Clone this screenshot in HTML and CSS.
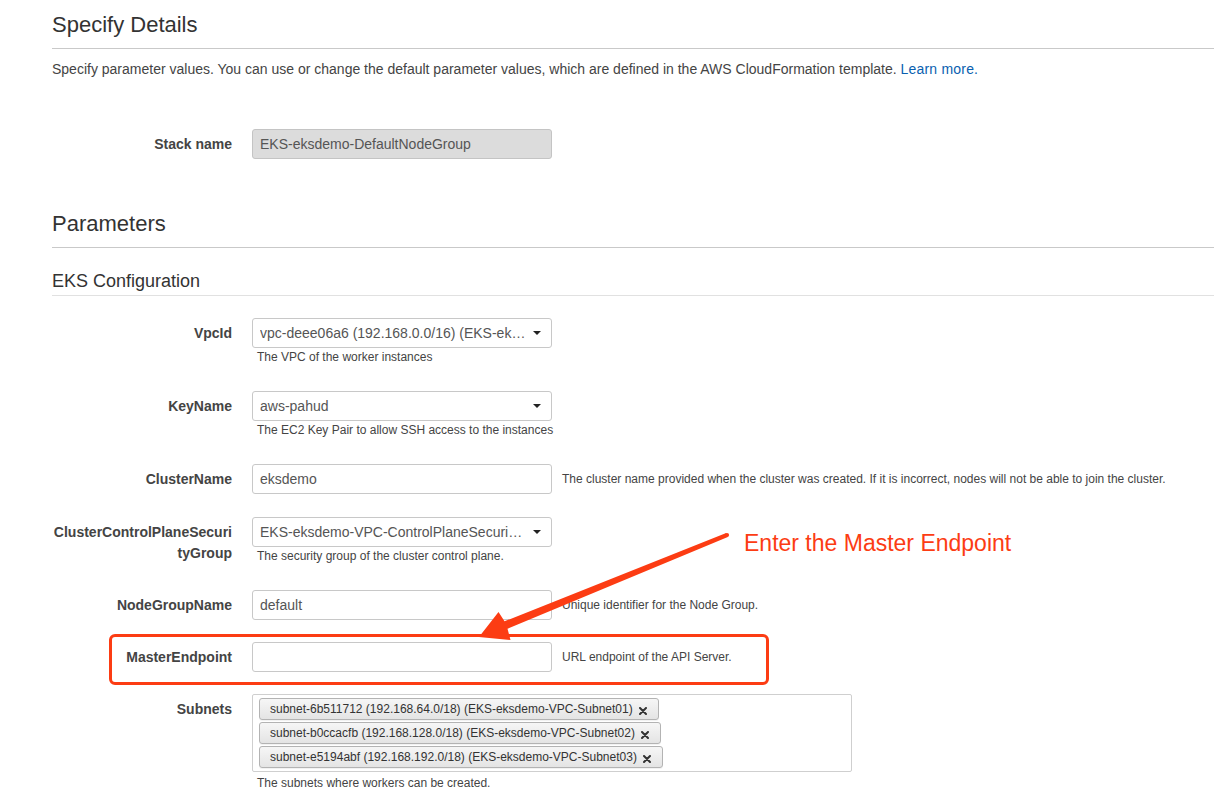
FILE: index.html
```html
<!DOCTYPE html>
<html lang="en">
<head>
<meta charset="utf-8">
<title>Specify Details</title>
<link rel="stylesheet" href="styles.css">
</head>
<body>
<div class="page">
  <h1 class="section-title">Specify Details</h1>
  <p class="intro">Specify parameter values. You can use or change the default parameter values, which are defined in the AWS CloudFormation template. <a class="link" href="#">Learn more.</a></p>

  <div class="row stack-row">
    <div class="label">Stack name</div>
    <div class="control">
      <div class="field-col"><div class="input input-disabled">EKS-eksdemo-DefaultNodeGroup</div></div>
    </div>
  </div>

  <h2 class="section-title params-title">Parameters</h2>
  <h3 class="group-title">EKS Configuration</h3>

  <div class="row first-row">
    <div class="label">VpcId</div>
    <div class="control">
      <div class="field-col">
        <div class="input select"><span class="select-text">vpc-deee06a6 (192.168.0.0/16) (EKS-ek…</span><span class="caret"></span></div>
        <div class="help-below">The VPC of the worker instances</div>
      </div>
    </div>
  </div>

  <div class="row">
    <div class="label">KeyName</div>
    <div class="control">
      <div class="field-col">
        <div class="input select"><span class="select-text">aws-pahud</span><span class="caret"></span></div>
        <div class="help-below">The EC2 Key Pair to allow SSH access to the instances</div>
      </div>
    </div>
  </div>

  <div class="row">
    <div class="label">ClusterName</div>
    <div class="control">
      <div class="field-col"><div class="input">eksdemo</div></div>
      <div class="help-side">The cluster name provided when the cluster was created. If it is incorrect, nodes will not be able to join the cluster.</div>
    </div>
  </div>

  <div class="row row-after-inline">
    <div class="label">ClusterControlPlaneSecurityGroup</div>
    <div class="control">
      <div class="field-col">
        <div class="input select"><span class="select-text">EKS-eksdemo-VPC-ControlPlaneSecuri…</span><span class="caret"></span></div>
        <div class="help-below">The security group of the cluster control plane.</div>
      </div>
    </div>
  </div>

  <div class="row">
    <div class="label">NodeGroupName</div>
    <div class="control">
      <div class="field-col"><div class="input">default</div></div>
      <div class="help-side">Unique identifier for the Node Group.</div>
    </div>
  </div>

  <div class="row highlight-row">
    <div class="highlight-box"></div>
    <div class="label">MasterEndpoint</div>
    <div class="control">
      <div class="field-col"><div class="input"></div></div>
      <div class="help-side">URL endpoint of the API Server.</div>
    </div>
  </div>

  <div class="row">
    <div class="label">Subnets</div>
    <div class="control">
      <div class="multi-col">
        <div class="multi">
          <div class="token"><span>subnet-6b511712 (192.168.64.0/18) (EKS-eksdemo-VPC-Subnet01)</span><svg class="token-x" width="8" height="8" viewBox="0 0 8 8"><path d="M1 1 L7 7 M7 1 L1 7" stroke="#333" stroke-width="2" stroke-linecap="round"/></svg></div>
          <div class="token"><span>subnet-b0ccacfb (192.168.128.0/18) (EKS-eksdemo-VPC-Subnet02)</span><svg class="token-x" width="8" height="8" viewBox="0 0 8 8"><path d="M1 1 L7 7 M7 1 L1 7" stroke="#333" stroke-width="2" stroke-linecap="round"/></svg></div>
          <div class="token"><span>subnet-e5194abf (192.168.192.0/18) (EKS-eksdemo-VPC-Subnet03)</span><svg class="token-x" width="8" height="8" viewBox="0 0 8 8"><path d="M1 1 L7 7 M7 1 L1 7" stroke="#333" stroke-width="2" stroke-linecap="round"/></svg></div>
        </div>
        <div class="help-below multi-help">The subnets where workers can be created.</div>
      </div>
    </div>
  </div>

  <svg class="arrow" width="1214" height="808" viewBox="0 0 1214 808">
    <circle cx="727" cy="535" r="2.1" fill="#fc3c13"/>
    <polygon fill="#fc3c13" points="726.2,533.1 504.5,621.3 498.5,612 479,637 510.5,640 507.5,628.7 727.8,536.9"/>
  </svg>
  <div class="callout">Enter the Master Endpoint</div>
</div>
</body>
</html>
```

FILE: styles.css
```css
html, body {
  margin: 0;
  padding: 0;
  background: #ffffff;
}

.page {
  position: relative;
  padding-left: 52px;
  min-height: 808px;
  box-sizing: border-box;
  font-family: "Liberation Sans", Arial, sans-serif;
  color: #444;
  overflow: hidden;
}

.section-title {
  margin: 0;
  font-size: 22px;
  line-height: 26px;
  font-weight: normal;
  color: #333;
  padding: 12px 0 10px 0;
  border-bottom: 1px solid #c9c9c9;
}

.params-title {
  margin-top: 52px;
  padding-top: 0;
}

.intro {
  margin: 10px 0 0 0;
  font-size: 14px;
  line-height: 20px;
  color: #444;
}

.link {
  color: #0a5fb0;
  text-decoration: none;
  letter-spacing: 0.2px;
}

.group-title {
  margin: 22px 0 0 0;
  font-size: 18px;
  line-height: 22px;
  font-weight: normal;
  color: #333;
  padding-bottom: 3px;
  border-bottom: 1px solid #e1e1e1;
}

.row {
  display: flex;
  align-items: flex-start;
  column-gap: 20px;
  margin-top: 22px;
}

.stack-row {
  margin-top: 50px;
}

.first-row {
  margin-top: 22px;
}

.row-after-inline {
  margin-top: 23px;
}

.label {
  width: 180px;
  flex: none;
  text-align: right;
  font-size: 14px;
  line-height: 21px;
  padding-top: 5px;
  font-weight: bold;
  color: #444;
  word-break: break-all;
}

.control {
  display: flex;
  align-items: flex-start;
  column-gap: 10px;
}

.field-col {
  width: 300px;
  flex: none;
}

.input {
  box-sizing: border-box;
  height: 30px;
  border: 1px solid #c8c8c8;
  border-radius: 3px;
  background: #fff;
  padding: 0 7px 0 7px;
  font-size: 14px;
  line-height: 28px;
  color: #555;
  white-space: nowrap;
  overflow: hidden;
}

.input-disabled {
  background: #dcdcdc;
  border-color: #c4c4c4;
}

.select {
  display: flex;
  align-items: center;
  justify-content: space-between;
  padding-right: 10px;
}

.select-text {
  overflow: hidden;
  white-space: nowrap;
}

.caret {
  flex: none;
  width: 0;
  height: 0;
  border-left: 4px solid transparent;
  border-right: 4px solid transparent;
  border-top: 4px solid #222;
  margin-left: 8px;
}

.help-below {
  font-size: 12px;
  line-height: 18px;
  padding: 0 0 3px 5px;
  color: #444;
  white-space: nowrap;
}

.multi-help {
  padding-top: 2px;
}

.help-side {
  font-size: 12px;
  line-height: 18px;
  padding-top: 6px;
  color: #444;
  white-space: nowrap;
}

.highlight-row {
  position: relative;
}

.highlight-box {
  position: absolute;
  left: 57px;
  top: -8px;
  width: 660px;
  height: 51px;
  box-sizing: border-box;
  border: 3px solid #fc3c13;
  border-radius: 6px;
}

.multi-col {
  width: 600px;
}

.multi {
  box-sizing: border-box;
  border: 1px solid #cfcfcf;
  border-radius: 2px;
  padding: 3px 6px;
  display: flex;
  flex-direction: column;
  align-items: flex-start;
  row-gap: 2px;
  background: #fff;
}

.token {
  box-sizing: border-box;
  height: 22px;
  display: flex;
  align-items: center;
  padding: 0 11px 0 10px;
  border: 1px solid #b3b3b3;
  border-radius: 3px;
  background: linear-gradient(#f6f6f6, #e4e4e4);
  box-shadow: 0 1px 0 rgba(0,0,0,0.05);
  font-size: 12px;
  color: #333;
  white-space: nowrap;
}

.token-x {
  margin-left: 6px;
  margin-top: 3px;
  flex: none;
}

.arrow {
  position: absolute;
  left: 0;
  top: 0;
  pointer-events: none;
}

.callout {
  position: absolute;
  left: 744px;
  top: 529px;
  font-size: 23px;
  line-height: 28px;
  color: #fc3c13;
  white-space: nowrap;
}
```
